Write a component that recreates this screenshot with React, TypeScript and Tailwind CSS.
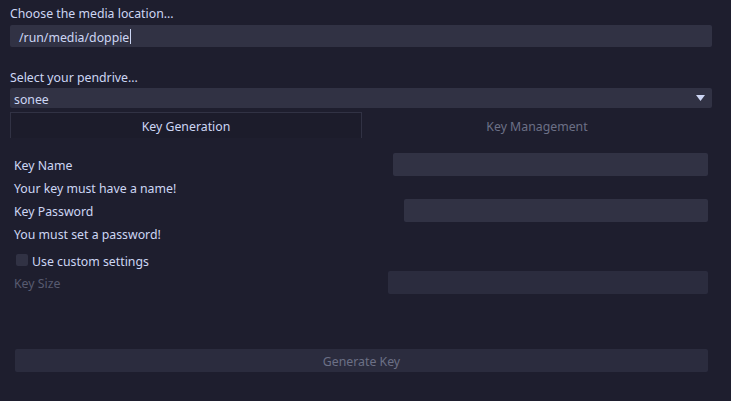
import { useState } from "react";

function Field({ width }: { width: string }) {
  return <div className={`h-[23px] rounded-[2px] bg-[#313244] ${width}`} />;
}

// Noto Sans sits high in its line box; nudge glyphs down to match the reference
function T({ children, className = "" }: { children: React.ReactNode; className?: string }) {
  return <span className={`pt-[4px] ${className}`}>{children}</span>;
}

export default function App() {
  const [custom, setCustom] = useState(false);

  return (
    <div className="relative h-[401px] w-[731px] overflow-hidden bg-[#1e1e2e] text-[12.3px] leading-none text-[#cdd6f4] [font-family:'Noto_Sans',sans-serif]">
      <div className="pl-[10px] pr-[19px] pt-[6px]">
        <div className="h-[17px] pt-[2px]">Choose the media location...</div>
        <div className="mt-[2px] flex h-[22px] items-center rounded-[2px] bg-[#313244] pl-[9px]">
          <T>/run/media/doppie</T>
          <span className="ml-px inline-block h-[15px] w-px bg-[#cdd6f4]" />
        </div>

        <div className="mt-[23px] h-[17px] pt-[2px]">Select your pendrive...</div>
        <div className="mt-[1px] flex h-[20px] items-center justify-between rounded-[2px] bg-[#313244] pl-[4px] pr-[7px]">
          <T>sonee</T>
          <svg width="9" height="6" viewBox="0 0 9 6">
            <path d="M0 0h9L4.5 6z" fill="#cdd6f4" />
          </svg>
        </div>

        {/* tabs */}
        <div className="mt-[4px] flex h-[26px]">
          <div className="flex flex-1 items-center justify-center border-x border-t border-[#313244] bg-[#1c1c2b]">
            <T>Key Generation</T>
          </div>
          <div className="flex flex-1 items-center justify-center text-[#6c7086]">
            <T>Key Management</T>
          </div>
        </div>
      </div>

      <div className="pl-[14px] pr-[23px] pt-[15px]">
        <div className="flex items-center justify-between">
          <T>Key Name</T>
          <Field width="w-[315px]" />
        </div>
        <div className="flex h-[23px] items-center">
          <T>Your key must have a name!</T>
        </div>
        <div className="flex items-center justify-between">
          <T>Key Password</T>
          <Field width="w-[304px]" />
        </div>
        <div className="flex h-[23px] items-center">
          <T>You must set a password!</T>
        </div>
        <label className="mt-[4px] flex h-[22px] items-center gap-[4px] pl-[2px]">
          <input
            type="checkbox"
            checked={custom}
            onChange={() => setCustom(!custom)}
            className="h-[12px] w-[12px] appearance-none rounded-[2px] bg-[#313244]"
          />
          <T>Use custom settings</T>
        </label>
        <div className="flex items-center justify-between">
          <T className="text-[#585b70]">Key Size</T>
          <div className="h-[23px] w-[320px] rounded-[2px] bg-[#2b2c3e]" />
        </div>

        <div className="mt-[55px] ml-[1px] flex h-[23px] items-center justify-center rounded-[2px] bg-[#2b2c3e] text-[#6c7086]">
          <T>Generate Key</T>
        </div>
      </div>
    </div>
  );
}
